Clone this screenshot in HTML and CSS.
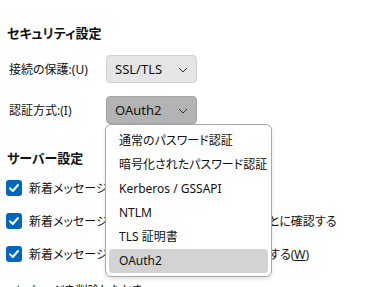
FILE: index.html
```html
<!DOCTYPE html>
<html>
<head>
<title>サーバー設定</title>
<meta charset="UTF-8">
<link rel="stylesheet" href="styles.css">
</head>
<body>
	<div id="pane">
		<h2 class="title first">セキュリティ設定</h2>
		<div class="row">
			<label class="label">接続の保護:(U)</label>
			<div class="select">
				<span>SSL/TLS</span>
				<svg class="chevron" width="10" height="6" viewBox="0 0 10 6"><path d="M1 1L5 5L9 1" fill="none" stroke="#333" stroke-width="1"/></svg>
			</div>
		</div>
		<div class="row">
			<label class="label">認証方式:(I)</label>
			<div class="select open">
				<span>OAuth2</span>
				<svg class="chevron" width="10" height="6" viewBox="0 0 10 6"><path d="M1 1L5 5L9 1" fill="none" stroke="#333" stroke-width="1"/></svg>
				<ul class="popup">
					<li>通常のパスワード認証</li>
					<li>暗号化されたパスワード認証</li>
					<li>Kerberos / GSSAPI</li>
					<li>NTLM</li>
					<li>TLS 証明書</li>
					<li class="current">OAuth2</li>
				</ul>
			</div>
		</div>

		<h2 class="title second">サーバー設定</h2>
		<div class="check"><span class="box"><svg width="16" height="16" viewBox="0 0 16 16"><path d="M4 8.2L6.8 11L12 5" fill="none" stroke="#fff" stroke-width="2" stroke-linecap="round" stroke-linejoin="round"/></svg></span>新着メッセージがないか起動時に確認する(C)</div>
		<div class="check"><span class="box"><svg width="16" height="16" viewBox="0 0 16 16"><path d="M4 8.2L6.8 11L12 5" fill="none" stroke="#fff" stroke-width="2" stroke-linecap="round" stroke-linejoin="round"/></svg></span>新着メッセージがないか<span class="minutes">10</span>分ごとに確認する</div>
		<div class="check"><span class="box"><svg width="16" height="16" viewBox="0 0 16 16"><path d="M4 8.2L6.8 11L12 5" fill="none" stroke="#fff" stroke-width="2" stroke-linecap="round" stroke-linejoin="round"/></svg></span>新着メッセージが届いたらサーバーで即時通知する(<u>W</u>)</div>
		<p class="more">メッセージを削除したとき:</p>
	</div>
</body>
</html>
```
FILE: styles.css
```css
* {
	box-sizing: border-box;
}
body {
	margin: 0;
	overflow: hidden;
	font: 12px "Noto Sans", "Noto Sans CJK JP", sans-serif;
	font-feature-settings: "palt";
	color: #111;
	background: #fff;
}
#pane {
	padding-left: 7px;
}
.title {
	margin: 0;
	font-size: 13px;
	font-weight: bold;
	line-height: 16px;
	color: #111;
}
.title.first {
	margin-top: 25px;
	margin-bottom: 14px;
}
.title.second {
	margin-top: 26px;
	margin-bottom: 12px;
}

.row {
	display: flex;
	align-items: center;
	height: 28px;
	margin-bottom: 13px;
}
.label {
	width: 99px;
	padding-left: 2px;
}
.select {
	position: relative;
	display: flex;
	align-items: center;
	justify-content: space-between;
	width: 91px;
	height: 28px;
	padding: 0 8px 0 8px;
	background: #e5e5e5;
	border: 1px solid #d2d2d2;
	border-radius: 4px;
	font-size: 13px;
}
.select.open {
	background: #b3b3b3;
	border-color: #a4a4a4;
}
.chevron {
	margin-top: 1px;
}
.popup {
	position: absolute;
	left: -2px;
	top: 27px;
	width: 167px;
	margin: 0;
	padding: 4px 3px 3px;
	list-style: none;
	background: #fff;
	border: 1px solid #a8a8a8;
	border-radius: 6px;
	box-shadow: 0 2px 4px rgba(0, 0, 0, 0.12);
	font-size: 12px;
	z-index: 2;
}
.popup li {
	height: 24px;
	line-height: 24px;
	padding-left: 10px;
	border-radius: 4px;
	white-space: nowrap;
}
.popup li.current {
	background: #d3d3d3;
}

.check {
	display: flex;
	align-items: center;
	height: 20px;
	margin-bottom: 13px;
	white-space: nowrap;
}
.box {
	display: inline-flex;
	width: 16px;
	height: 16px;
	margin: 0 7px 0 -1px;
	background: #0067c0;
	border-radius: 3px;
}
.minutes {
	display: inline-block;
	width: 80px;
	margin: 0 6px;
	text-align: center;
}
.more {
	margin: 19px 0 0 3px;
	line-height: 16px;
}
```
